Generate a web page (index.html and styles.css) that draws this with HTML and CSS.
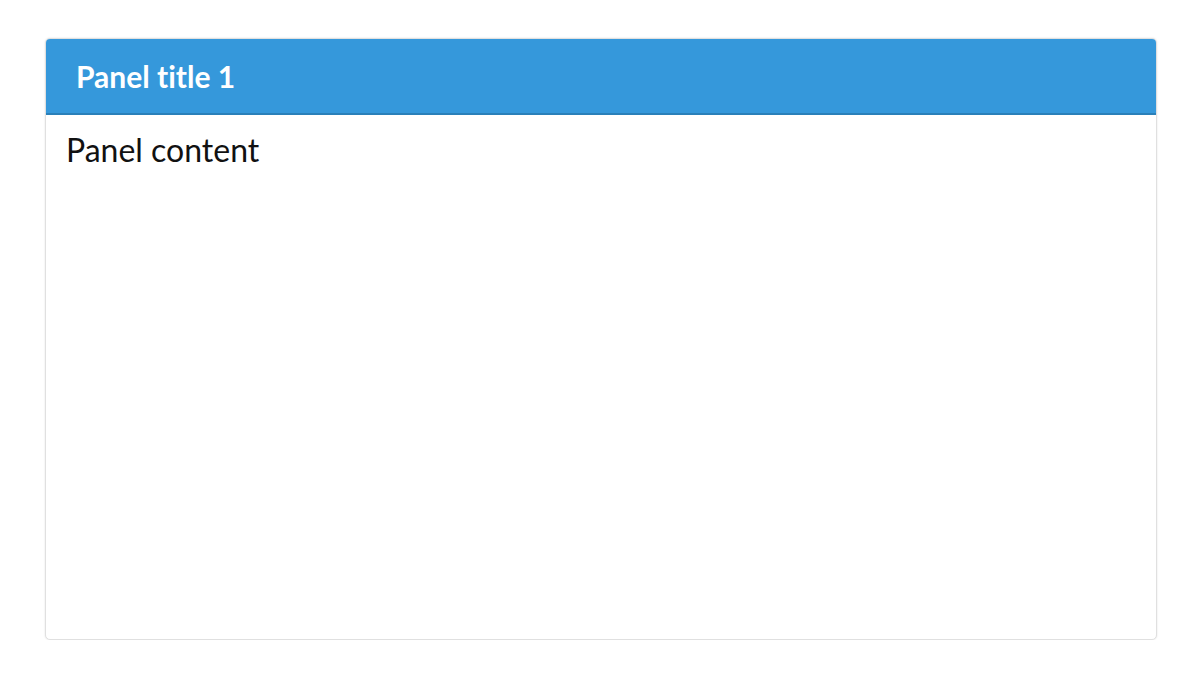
FILE: index.html
```html
<!DOCTYPE html>
<html>
<head>
<meta charset="utf-8">
<link rel="stylesheet" href="styles.css">
</head>
<body>
<div class="page">
  <div class="panel">
    <div class="panel-header">Panel title 1</div>
    <div class="panel-body">Panel content</div>
  </div>
</div>
</body>
</html>
```
FILE: styles.css
```css
html, body {
  margin: 0;
  padding: 0;
  background: #ffffff;
  font-family: Lato, "Open Sans", sans-serif;
  font-variant-ligatures: none;
}
.page {
  padding: 38px 43px 0 45px;
}
.panel {
  height: 600px;
  border: 1px solid #e0e0e0;
  border-radius: 5px;
  box-shadow: 0 0 2px rgba(0,0,0,0.12);
  background: #fff;
  overflow: hidden;
  display: flex;
  flex-direction: column;
}
.panel-header {
  box-sizing: border-box;
  height: 76px;
  background: #3598db;
  border-bottom: 2px solid #2a80b9;
  color: #fff;
  font-weight: bold;
  font-size: 30px;
  padding-left: 30px;
  display: flex;
  align-items: center;
  flex: none;
}
.panel-body {
  padding: 16px 20px;
  font-size: 32px;
  color: #111;
  line-height: 1.2;
}
```
